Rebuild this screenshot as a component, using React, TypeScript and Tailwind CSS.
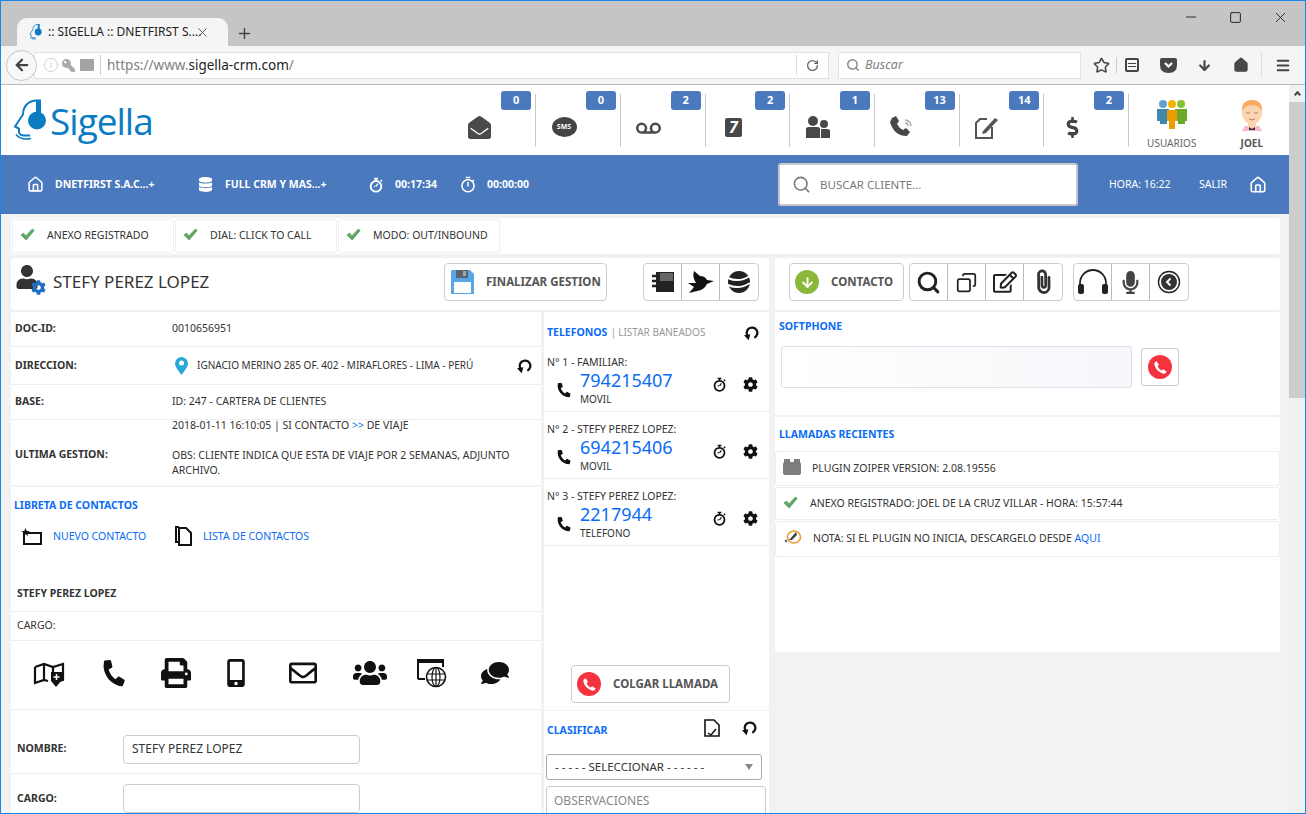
import React from "react";
import { ArrowLeft, Search, RotateCw, Star, Plus, X, Minus, Square, Menu, ArrowDown, House, Copy, Phone } from "lucide-react";
import { FaEnvelopeOpen, FaVoicemail, FaDollarSign, FaDatabase, FaUser, FaCog, FaPhone, FaPrint, FaMobileAlt, FaUsers, FaComments, FaRegEnvelope, FaMicrophone, FaRegEdit, FaKey, FaPaperclip } from "react-icons/fa";
import { MdOutlineTimer } from "react-icons/md";

const FONT = "[font-family:'Noto_Sans','Liberation_Sans',sans-serif]";

function Undo({ size = 18 }: { size?: number }) {
  return (
    <svg width={size} height={size} viewBox="0 0 24 24" fill="none">
      <path d="M8.5 18A8 8 0 1 1 17 19" stroke="#111" strokeWidth="3.4" />
      <path d="M1.5 15.5 L11 14 L8.5 23 Z" fill="#111" />
    </svg>
  );
}
function Check({ size = 16 }: { size?: number }) {
  return (
    <svg width={size} height={size} viewBox="0 0 16 16">
      <path d="M1 8.5 L3.6 6.3 L6.4 9.2 L13.2 2 L15.2 3.8 L6.5 14 Z" fill="#5fa863" stroke="#3f8a48" strokeWidth=".5" />
    </svg>
  );
}
function RedPhone({ size = 24 }: { size?: number }) {
  return (
    <span style={{ width: size, height: size }} className="rounded-full bg-[#f5333f] flex items-center justify-center shrink-0">
      <svg width={size * 0.62} height={size * 0.62} viewBox="0 0 24 24"><path d="M6 2 L9.5 7.5 L7.5 10 Q9.5 15 14 17 L16.5 15 L22 18.5 Q20.5 22.5 17 22 Q5 19 2 7 Q2 3 6 2 Z" fill="#fff" /></svg>
    </span>
  );
}
function Stopwatch({ size = 16, color = "#111" }: { size?: number; color?: string }) {
  return (
    <svg width={size} height={size} viewBox="0 0 24 24" fill="none">
      <circle cx="12" cy="14" r="8" stroke={color} strokeWidth="2.8" />
      <path d="M9 2.5h6M12 3v3M19 4.5l2 2" stroke={color} strokeWidth="2.5" />
      <path d="M12 14l3-4M9 14h2" stroke={color} strokeWidth="2" />
    </svg>
  );
}
function Floppy() {
  return (
    <svg width="23" height="24" viewBox="0 0 23 24">
      <path d="M1 0H19L23 4V24H0V1Z" fill="#5aa5e6" />
      <rect x="5" y="0" width="12" height="8" fill="#5b6470" />
      <rect x="12" y="1" width="3" height="5" fill="#9aa" />
      <rect x="3" y="12" width="17" height="11" fill="#fdfdfd" />
    </svg>
  );
}
function HeadLogo({ w, h, solid }: { w: number; h: number; solid?: boolean }) {
  return (
    <svg width={w} height={h} viewBox="0 0 34 42" fill="none">
      <path d="M24 1 C15 1 10 7 10 15 L2 27 L6 29 L6 33 Q7 36 11 36 L17 36" stroke="#0a7cc4" strokeWidth="2" />
      <path d="M3 35 Q8 41 18 39" stroke="#0a7cc4" strokeWidth={solid ? 2.4 : 1.6} />
      <rect x="23" y="0" width="5" height="14" fill="#0a7cc4" />
      <circle cx="24" cy="21" r="9" fill="#0a7cc4" />
    </svg>
  );
}

const badges: [React.ReactNode, string][] = [
  [<FaEnvelopeOpen size={23} color="#4a4a4a" />, "0"],
  [
    <span className="relative flex h-[20px] w-[25px] items-center justify-center rounded-[50%] bg-[#444] text-[7px] font-bold text-white">SMS</span>,
    "0",
  ],
  [<FaVoicemail size={25} color="#4a4a4a" />, "2"],
  [
    <span className="flex h-[19px] w-[17px] items-center justify-center rounded-[2px] bg-[#484848] text-[16px] font-bold italic leading-none text-white">7</span>,
    "2",
  ],
  [
    <svg width="24" height="22" viewBox="0 0 24 22" fill="#484848"><circle cx="7" cy="5" r="5" /><circle cx="18" cy="8" r="4" /><path d="M0 13q0-2 3-2h8q3 0 3 2v9H0ZM15 13h6q3 0 3 2v7h-9Z" /></svg>,
    "1",
  ],
  [
    <svg width="25" height="22" viewBox="0 0 25 22" fill="none"><path d="M2 2 L6 0 L9 5 L7 8 Q9 12 13 14 L16 12 L20 16 L17 20 Q4 20 0 6 Z" fill="#484848" /><path d="M15 4a6 6 0 0 1 6 6M15 7a3 3 0 0 1 3 3" stroke="#aaa" strokeWidth="1.5" /></svg>,
    "13",
  ],
  [
    <svg width="24" height="23" viewBox="0 0 24 23" fill="none"><path d="M12 3H5L1 7V22H17V11" stroke="#555" strokeWidth="2" /><path d="M8 15L20 2L23 4L11 17L7 18Z" fill="#555" /></svg>,
    "14",
  ],
  [<FaDollarSign size={21} color="#444" />, "2"],
];

function Chip({ t }: { t: string }) {
  return (
    <div className="flex h-[34px] w-[162px] items-center rounded-[3px] border border-[#eeeeee] pl-[7px]">
      <span className="-mt-1 w-[27px]"><Check size={15} /></span>
      <span className="text-[10.5px] text-[#333]">{t}</span>
    </div>
  );
}
function Group({ children, cell = 38 }: { children: React.ReactNode[]; cell?: number }) {
  return (
    <div className="flex h-[38px] rounded-[4px] border border-[#cccccc] bg-white">
      {children.map((c, i) => (
        <div key={i} style={{ width: cell }} className="flex items-center justify-center border-r border-[#bbbbbb] last:border-r-0">{c}</div>
      ))}
    </div>
  );
}
function Title({ children }: { children: React.ReactNode }) {
  return <span className="text-[10.5px] font-bold text-[#0a6cf5]">{children}</span>;
}
function InfoRow({ label, h, children }: { label: string; h: string; children: React.ReactNode }) {
  return (
    <div className={`flex items-center border-b border-[#eeeeee] pl-[4px] text-[10.5px] text-[#333] ${h}`}>
      <b className="w-[157px] shrink-0 text-[#333]">{label}</b>
      {children}
    </div>
  );
}
function PhoneEntry({ n, num, kind }: { n: string; num: string; kind: string }) {
  return (
    <div className="h-[67px] border-b border-[#eeeeee] pl-[3px] pr-[2px]">
      <div className="flex h-[22px] items-end text-[10.5px] leading-none text-[#333]">{n}</div>
      <div className="flex">
        <span className="flex w-[33px] items-center justify-center pt-[8px]"><FaPhone size={14} color="#111" className="rotate-[95deg]" /></span>
        <div className="flex flex-1 flex-col pt-[1px]">
          <span className="text-[18px] leading-[25px] text-[#0a6cf5]">{num}</span>
          <span className="text-[10px] leading-[12px] text-[#333]">{kind}</span>
        </div>
        <span className="mr-[16px] flex items-center pb-[4px]"><Stopwatch size={15} /></span>
        <span className="mr-[9px] flex items-center pb-[4px]"><FaCog size={15} color="#111" /></span>
      </div>
    </div>
  );
}

export default function App() {
  return (
    <div className={`flex h-[814px] w-[1306px] flex-col overflow-hidden border border-[#1a87e6] bg-[#f2f2f2] ${FONT}`}>
      {/* tab strip */}
      <div className="flex h-[45px] shrink-0 bg-[#c5c5c5]">
        <div className="mt-[17px] ml-[16px] flex h-[28px] w-[211px] items-center rounded-t-[10px] bg-[#f5f5f5] pl-[11px]">
          <HeadLogo w={15} h={16} solid />
          <span className="ml-[5px] w-[147px] text-[12px] whitespace-nowrap text-[#222]">:: SIGELLA :: DNETFIRST S....</span>
          <X size={15} color="#555" strokeWidth={1.5} />
        </div>
        <div className="mt-[20px] ml-[8px] flex h-[24px] w-[20px] items-center"><Plus size={17} color="#444" strokeWidth={2} /></div>
        <div className="flex-1" />
        <div className="mt-[8px] mr-[16px] flex h-[16px] gap-[30px]">
          <Minus size={16} color="#222" strokeWidth={1.4} />
          <Square size={13} color="#222" strokeWidth={1.8} className="mt-[2px]" />
          <X size={17} color="#222" strokeWidth={1.3} />
        </div>
      </div>
      {/* toolbar */}
      <div className="flex h-[39px] shrink-0 items-center border-b border-[#bbbbbb] bg-[#f5f5f5] pl-[5px]">
        <div className="z-10 flex h-[31px] w-[31px] items-center justify-center rounded-full border border-[#c6c6c6] bg-[#f8f8f8]">
          <ArrowLeft size={18} color="#444" strokeWidth={3} />
        </div>
        <div className="-ml-[3px] flex h-[27px] w-[795px] items-center border border-[#e2e2e2] bg-white pl-[9px]">
          <span className="flex h-[14px] w-[14px] items-center justify-center rounded-full border border-[#d0d0d0] text-[9px] text-[#ccc]">i</span>
          <FaKey size={13} color="#aaa" className="ml-[4px] -scale-x-100" />
          <span className="ml-[5px] h-[12px] w-[14px] rounded-[1px] bg-[#a3a3a3]" />
          <span className="ml-[6px] h-[20px] border-l border-[#cccccc]" />
          <span className="ml-[6px] flex-1 text-[13.5px] text-[#808080]">https://www.<span className="text-[#222]">sigella-crm.com</span>/</span>
          <span className="h-[20px] border-l border-[#dddddd]" />
          <span className="flex w-[31px] justify-center"><RotateCw size={13} color="#666" strokeWidth={2.4} /></span>
        </div>
        <div className="ml-[9px] flex h-[27px] w-[243px] items-center rounded-[1px] border border-[#e2e2e2] bg-white pl-[7px]">
          <Search size={14} color="#888" strokeWidth={2.5} />
          <span className="ml-[5px] text-[12.5px] text-[#808080] italic">Buscar</span>
        </div>
        <span className="ml-[12px] flex w-[17px] justify-center"><Star size={17} color="#444" strokeWidth={2.2} /></span>
        <span className="ml-[6px] h-[16px] border-l border-[#cccccc]" />
        <span className="ml-[8px] flex h-[14px] w-[14px] flex-col justify-center gap-[2px] rounded-[2px] border-2 border-[#444] px-[1px]"><i className="h-[1px] bg-[#444]" /><i className="h-[1px] bg-[#444]" /></span>
        <svg className="ml-[21px]" width="17" height="15" viewBox="0 0 17 15"><path d="M2 0H15Q17 0 17 2V7Q17 15 8.5 15Q0 15 0 7V2Q0 0 2 0Z" fill="#484848" /><path d="M5 5L8.5 8.5L12 5" stroke="#fff" strokeWidth="2.2" fill="none" /></svg>
        <span className="ml-[20px] flex w-[15px] justify-center"><ArrowDown size={17} color="#484848" strokeWidth={3.5} /></span>
        <span className="ml-[21px] flex w-[16px] justify-center"><House size={16} color="#484848" fill="#484848" /></span>
        <span className="ml-[12px] h-[26px] border-l border-[#dddddd]" />
        <span className="ml-[13px] flex w-[16px] justify-center"><Menu size={19} color="#444" strokeWidth={3} /></span>
      </div>
      {/* page */}
      <div className="flex min-h-0 flex-1">
        <div className="flex min-w-0 flex-1 flex-col">
          {/* header */}
          <div className="flex h-[70px] shrink-0 items-center bg-white">
            <div className="ml-[12px] flex w-[441px] items-center">
              <HeadLogo w={34} h={43} />
              <span className="ml-[3px] text-[37px] leading-none font-normal text-[#0a7cc4] [font-family:'Open_Sans',sans-serif] tracking-[-1px]">Sigella</span>
            </div>
            {badges.map(([ic, n], i) => (
              <div key={i} className="relative flex h-[53px] w-[85px] items-center justify-center border-r border-[#c8c8c8] pt-[14px] pr-[28px]">
                {ic}
                <span className="absolute top-[-3px] right-[4px] flex h-[19px] w-[30px] items-center justify-center rounded-[3px] bg-[#4a79bd] text-[11px] font-bold text-white">{n}</span>
              </div>
            ))}
            <div className="flex w-[86px] flex-col items-center pt-[6px]">
              <svg width="32" height="30" viewBox="0 0 32 30">
                <circle cx="7" cy="5" r="4" fill="#5fa3cc" /><path d="M1 10h12v12h-2v3H4v-3H1Z" fill="#3f87ad" />
                <circle cx="25" cy="5" r="4" fill="#84c232" /><path d="M19 10h12v12h-2v3h-7v-3h-3Z" fill="#6aa827" />
                <circle cx="16" cy="5" r="4" fill="#f5b400" /><path d="M11 11h10v11h-2v8h-6v-8h-2Z" fill="#eb9c00" />
              </svg>
              <span className="mt-[9px] text-[10px] leading-none text-[#666]">USUARIOS</span>
            </div>
            <div className="flex w-[75px] flex-col items-center pt-[6px]">
              <svg width="26" height="32" viewBox="0 0 26 32">
                <path d="M6 27h14l3 5H3Z" fill="#f7b7c8" />
                <rect x="9" y="24" width="8" height="5" fill="#fbd3ae" />
                <ellipse cx="13" cy="14" rx="10" ry="11" fill="#fbd3ae" />
                <path d="M3 13Q2 1 13 1Q24 1 23 13Q21 6 13 6Q5 6 3 13Z" fill="#fba95c" />
                <path d="M7 14h4M15 14h4M10 20q3 2 6 0" stroke="#b9825c" strokeWidth="1" fill="none" />
                <path d="M10 28l3 2 3-2v3h-6Z" fill="#333" />
              </svg>
              <span className="mt-[7px] text-[10px] leading-none font-bold text-[#555]">JOEL</span>
            </div>
          </div>
          {/* blue bar */}
          <div className="flex h-[59px] shrink-0 items-center bg-[#4a79bd] pl-[26px] text-[10.5px] font-bold whitespace-nowrap text-white">
            <span className="w-[28px]"><House size={17} color="#fff" strokeWidth={2.2} /></span>
            <span className="w-[143px]">DNETFIRST S.A.C...+</span>
            <span className="w-[27px]"><FaDatabase size={15} color="#fff" /></span>
            <span className="w-[143px]">FULL CRM Y MAS...+</span>
            <span className="w-[27px]"><Stopwatch size={16} color="#fff" /></span>
            <span className="w-[64px]">00:17:34</span>
            <span className="w-[28px]"><MdOutlineTimer size={18} color="#fff" /></span>
            <span className="w-[291px]">00:00:00</span>
            <div className="flex h-[43px] w-[300px] items-center rounded-[3px] border-2 border-[#c8c8c8] bg-white pl-[12px]">
              <Search size={19} color="#777" strokeWidth={2} />
              <span className="ml-[9px] text-[11.5px] font-normal text-[#777]">BUSCAR CLIENTE...</span>
            </div>
            <span className="ml-[31px] w-[90px] font-normal">HORA: 16:22</span>
            <span className="w-[50px] font-normal">SALIR</span>
            <House size={18} color="#fff" strokeWidth={2.2} />
          </div>
          {/* body */}
          <div className="relative min-h-0 flex-1 overflow-hidden pl-[10px]">
            <div className="mt-[4px] mr-[9px] flex h-[36px] gap-[1px] rounded-[3px] bg-white pt-[1px] pl-[1px]">
              <Chip t="ANEXO REGISTRADO" />
              <Chip t="DIAL: CLICK TO CALL" />
              <Chip t="MODO: OUT/INBOUND" />
            </div>
            <div className="mt-[4px] mr-[9px] flex h-[52px] gap-[6px]">
              <div className="flex w-[758px] rounded-[3px] bg-white pt-[5px]">
                <span className="relative mt-[2px] ml-[3px] h-[30px] w-[32px]">
                  <FaUser size={24} color="#333" className="ml-[1px]" />
                  <FaCog size={15} color="#1f6fc4" className="absolute right-0 bottom-0" />
                </span>
                <span className="mt-[4px] ml-[7px] w-[391px] text-[17px] leading-[30px] text-[#333]">STEFY PEREZ LOPEZ</span>
                <div className="flex h-[38px] w-[163px] items-center rounded-[4px] border border-[#cccccc] pl-[6px]">
                  <Floppy />
                  <span className="ml-[12px] text-[11.5px] font-bold text-[#555]">FINALIZAR GESTION</span>
                </div>
                <div className="ml-[36px]">
                  <Group>
                    {[
                      <svg key="a" width="24" height="24" viewBox="0 0 24 24"><rect x="5" y="2" width="18" height="20" fill="#222" /><path d="M1 6h6M1 11h6M1 16h6" stroke="#222" strokeWidth="2.5" /><rect x="9" y="3" width="13" height="8" fill="#666" /></svg>,
                      <svg key="b" width="28" height="24" viewBox="0 0 28 24"><path d="M7 1L13 6Q18 6 20 10L27 11L20 14Q17 20 10 21L2 23L7 17L1 13L9 13Q5 7 7 1Z" fill="#111" /></svg>,
                      <svg key="c" width="24" height="24" viewBox="0 0 24 24"><circle cx="12" cy="12" r="11" fill="#222" /><path d="M1 8Q12 13 23 6M1 15Q12 20 23 13" stroke="#fff" strokeWidth="2" fill="none" /></svg>,
                    ]}
                  </Group>
                </div>
              </div>
              <div className="flex flex-1 rounded-[3px] bg-white pt-[5px] pl-[14px]">
                <div className="flex h-[38px] w-[115px] items-center rounded-[4px] border border-[#cccccc] pl-[5px]">
                  <span className="flex h-[24px] w-[24px] items-center justify-center rounded-full bg-[#8ab83a]"><ArrowDown size={15} color="#fff" strokeWidth={3} /></span>
                  <span className="ml-[12px] text-[11.5px] font-bold text-[#555]">CONTACTO</span>
                </div>
                <div className="ml-[5px]">
                  <Group>
                    {[
                      <Search key="a" size={25} color="#222" strokeWidth={2.8} />,
                      <Copy key="b" size={21} color="#222" strokeWidth={2} className="-scale-x-100" />,
                      <FaRegEdit key="c" size={24} color="#222" />,
                      <FaPaperclip key="d" size={22} color="#333" className="-rotate-45" />,
                    ]}
                  </Group>
                </div>
                <div className="ml-[10px]">
                  <Group>
                    {[
                      <svg key="a" width="32" height="26" viewBox="0 0 32 26"><path d="M3 20V14A13 13 0 0 1 29 14V20" stroke="#222" strokeWidth="1.8" fill="none" /><rect x="1" y="15" width="6" height="10" rx="2" fill="#222" /><rect x="25" y="15" width="6" height="10" rx="2" fill="#222" /></svg>,
                      <FaMicrophone key="b" size={23} color="#444" />,
                      <svg key="c" width="24" height="24" viewBox="0 0 24 24"><circle cx="12" cy="12" r="10.5" stroke="#222" strokeWidth="1.4" fill="none" /><circle cx="12" cy="12" r="8" fill="#333" /><path d="M13.5 8.5L10 12L13.5 15.5" stroke="#fff" strokeWidth="2" fill="none" /></svg>,
                    ]}
                  </Group>
                </div>
              </div>
            </div>
            {/* columns */}
            <div className="mt-[2px] mr-[9px] flex gap-[6px]">
              {/* left + mid */}
              <div className="flex w-[758px] gap-[3px]">
                <div className="flex w-[530px] flex-col gap-[2px]">
                  <div className="bg-white">
                    <InfoRow label="DOC-ID:" h="h-[35px]"><span>0010656951</span></InfoRow>
                    <InfoRow label="DIRECCION:" h="h-[38px]">
                      <svg width="13" height="18" viewBox="0 0 13 18" className="ml-[3px]"><path d="M6.5 0A6.5 6.5 0 0 1 13 6.5Q13 10 6.5 18Q0 10 0 6.5A6.5 6.5 0 0 1 6.5 0Z" fill="#2aa9d8" /><circle cx="6.5" cy="6" r="2.5" fill="#fff" /></svg>
                      <span className="ml-[9px] w-[319px] text-[10px]">IGNACIO MERINO 285 OF. 402 - MIRAFLORES - LIMA - PERÚ</span>
                      <Undo size={16} />
                    </InfoRow>
                    <InfoRow label="BASE:" h="h-[35px]"><span>ID: 247 - CARTERA DE CLIENTES</span></InfoRow>
                    <div className="flex h-[65px] pl-[4px] text-[10.5px] text-[#333]">
                      <b className="mt-[27px] w-[157px] shrink-0">ULTIMA GESTION:</b>
                      <div className="w-[345px] leading-[15px]">
                        <div className="-mt-[2px]">2018-01-11 16:10:05 | SI CONTACTO <span className="text-[#0a6cf5]">&gt;&gt;</span> DE VIAJE</div>
                        <div className="mt-[15px]">OBS: CLIENTE INDICA QUE ESTA DE VIAJE POR 2 SEMANAS, ADJUNTO ARCHIVO.</div>
                      </div>
                    </div>
                  </div>
                  <div className="bg-white">
                    <div className="flex h-[223px] flex-col">
                      <div className="pt-[9px] pl-[3px] leading-[15px]"><Title>LIBRETA DE CONTACTOS</Title></div>
                      <div className="mt-[13px] flex h-[22px] items-center pl-[10px] text-[10.5px] text-[#0a6cf5]">
                        <svg width="22" height="18" viewBox="0 0 22 18" fill="none"><rect x="3" y="5" width="17" height="11" stroke="#111" strokeWidth="2" /><path d="M4.5 0L5.7 3H8.5L6.3 5L7.2 8L4.5 6.2L1.8 8L2.7 5L.5 3H3.3Z" fill="#111" /></svg>
                        <span className="ml-[10px] w-[122px]">NUEVO CONTACTO</span>
                        <svg width="18" height="22" viewBox="0 0 18 22" fill="none"><path d="M4 1H1V16H4" stroke="#111" strokeWidth="2" /><path d="M4 2H11L16 7V19H4Z" stroke="#111" strokeWidth="2" /></svg>
                        <span className="ml-[10px]">LISTA DE CONTACTOS</span>
                      </div>
                      <div className="mt-[24px] h-[41px] border-b border-[#eeeeee] pt-[14px] pl-[6px] text-[10.5px] leading-[15px] font-bold text-[#333]">STEFY PEREZ LOPEZ</div>
                      <div className="flex h-[30px] items-center border-b border-[#eeeeee] pl-[6px] text-[10.5px] text-[#333]">CARGO:</div>
                      <div className="flex h-[72px] items-center border-b border-[#eeeeee] pb-[3px] pl-[22px]">
                        <span className="w-[64px]">
                          <svg width="32" height="28" viewBox="0 0 32 28" fill="none"><path d="M2 8L11 5L20 8L30 5V21L22 23M2 8V24L11 21L15 22M11 5V21M20 8V14" stroke="#111" strokeWidth="2.2" /><path d="M18 13H29V21L23 28L18 22Z" fill="#111" /><path d="M23.5 15V21M20.5 18H26.5" stroke="#fff" strokeWidth="1.5" /></svg>
                        </span>
                        <span className="w-[64px]"><FaPhone size={24} color="#111" className="ml-[5px] rotate-[100deg]" /></span>
                        <span className="w-[64px]"><FaPrint size={30} color="#111" /></span>
                        <span className="w-[64px]"><FaMobileAlt size={28} color="#111" className="-ml-[3px]" /></span>
                        <span className="w-[64px]"><FaRegEnvelope size={28} color="#111" /></span>
                        <span className="w-[64px]"><FaUsers size={34} color="#111" /></span>
                        <span className="w-[64px]">
                          <svg width="30" height="30" viewBox="0 0 30 30" fill="none"><path d="M1 21V2H26V9" stroke="#111" strokeWidth="2" /><rect x="1" y="2" width="25" height="3" fill="#111" /><path d="M1 21H8" stroke="#111" strokeWidth="2" /><circle cx="19" cy="19" r="9.5" stroke="#111" strokeWidth="1.6" /><ellipse cx="19" cy="19" rx="4" ry="9.5" stroke="#111" strokeWidth="1.2" /><path d="M10 16H28M10 22H28M19 10V28" stroke="#111" strokeWidth="1.2" /></svg>
                        </span>
                        <span><FaComments size={28} color="#111" className="-scale-x-100" /></span>
                      </div>
                      <div className="flex items-center" />
                    </div>
                    <div className="flex h-[64px] items-center border-b border-[#eeeeee] pt-[15px] pl-[6px]">
                      <b className="w-[106px] text-[10.5px] text-[#333]">NOMBRE:</b>
                      <div className="flex h-[29px] w-[237px] items-center rounded-[4px] border border-[#cccccc] pl-[8px] text-[12px] text-[#333]">STEFY PEREZ LOPEZ</div>
                    </div>
                    <div className="flex h-[50px] items-start pt-[10px] pl-[6px]">
                      <b className="mt-[7px] w-[106px] text-[10.5px] text-[#333]">CARGO:</b>
                      <div className="h-[29px] w-[237px] rounded-[4px] border border-[#cccccc]" />
                    </div>
                  </div>
                </div>
                <div className="flex w-[225px] flex-col gap-[1px]">
                  <div className="flex h-[398px] flex-col rounded-[3px] bg-white">
                    <div className="flex h-[33px] items-center pt-[8px] pl-[3px] text-[10.5px]">
                      <Title>TELEFONOS</Title>
                      <span className="ml-[3px] text-[#aaa]">|</span>
                      <span className="ml-[2px] w-[125px] text-[10px] text-[#999]">LISTAR BANEADOS</span>
                      <Undo size={16} />
                    </div>
                    <PhoneEntry n="N° 1 - FAMILIAR:" num="794215407" kind="MOVIL" />
                    <PhoneEntry n="N° 2 - STEFY PEREZ LOPEZ:" num="694215406" kind="MOVIL" />
                    <PhoneEntry n="N° 3 - STEFY PEREZ LOPEZ:" num="2217944" kind="TELEFONO" />
                    <div className="mt-auto mb-[7px] ml-[27px] flex h-[38px] w-[159px] items-center rounded-[4px] border border-[#cccccc] pl-[5px]">
                      <RedPhone size={24} />
                      <span className="ml-[12px] text-[11.5px] font-bold text-[#555]">COLGAR LLAMADA</span>
                    </div>
                  </div>
                  <div className="flex-1 bg-white pl-[2px]">
                    <div className="flex h-[34px] items-center pl-[1px]">
                      <span className="w-[157px]"><Title>CLASIFICAR</Title></span>
                      <svg width="16" height="18" viewBox="0 0 16 18" fill="none"><path d="M1 1H10L15 6V17H1Z" stroke="#111" strokeWidth="1.6" /><path d="M4 14L7 16L12 10" stroke="#111" strokeWidth="1.5" /></svg>
                      <span className="ml-[21px]"><Undo size={16} /></span>
                    </div>
                    <div className="mt-[9px] flex h-[26px] w-[216px] items-center rounded-[3px] border border-[#aaaaaa] pl-[8px] text-[11.5px] text-[#333]">
                      <span className="w-[190px] whitespace-nowrap">- - - - - SELECCIONAR - - - - - -</span>
                      <span className="border-x-[4px] border-t-[6px] border-x-transparent border-t-[#888]" />
                    </div>
                    <div className="mt-[6px] h-[40px] w-[220px] rounded-[3px] border border-[#cccccc] pt-[5px] pl-[7px] text-[12px] text-[#888]">OBSERVACIONES</div>
                  </div>
                </div>
              </div>
              {/* right */}
              <div className="flex flex-1 flex-col gap-[2px]">
                <div className="h-[103px] rounded-[3px] bg-white">
                  <div className="pt-[5px] pl-[4px] leading-[15px]"><Title>SOFTPHONE</Title></div>
                  <div className="mt-[12px] ml-[6px] flex">
                    <div className="h-[42px] w-[351px] rounded-[3px] border border-[#dde2ea] bg-gradient-to-r from-white to-[#f5f7fa]" />
                    <div className="mt-[2px] ml-[9px] flex h-[38px] w-[38px] items-center justify-center rounded-[3px] border border-[#cccccc]"><RedPhone size={24} /></div>
                  </div>
                </div>
                <div className="h-[235px] rounded-[3px] bg-white">
                  <div className="flex h-[34px] items-center pt-[2px] pl-[4px]"><Title>LLAMADAS RECIENTES</Title></div>
                  <div className="flex h-[35px] items-center rounded-[3px] border border-[#eeeeee] pl-[7px] text-[10.5px] text-[#333]">
                    <span className="relative h-[13px] w-[18px] rounded-[2px] bg-[#7d7d7d] before:absolute before:-top-[3px] before:left-[1px] before:h-[4px] before:w-[6px] before:bg-[#7d7d7d] after:absolute after:-top-[3px] after:right-[1px] after:h-[4px] after:w-[6px] after:bg-[#7d7d7d]" />
                    <span className="ml-[11px]">PLUGIN ZOIPER VERSION: 2.08.19556</span>
                  </div>
                  <div className="mt-[1px] flex h-[33px] items-center rounded-[3px] border border-[#eeeeee] pl-[7px] text-[10.5px] text-[#333]">
                    <span className="-mt-[3px] w-[16px]"><Check size={15} /></span>
                    <span className="ml-[11px]">ANEXO REGISTRADO: JOEL DE LA CRUZ VILLAR - HORA: 15:57:44</span>
                  </div>
                  <div className="mt-[1px] flex h-[36px] items-center rounded-[3px] border border-[#eeeeee] pl-[8px] text-[10.5px] text-[#333]">
                    <svg width="18" height="16" viewBox="0 0 18 16" fill="none" className="-mt-[4px]"><ellipse cx="10" cy="8" rx="6.5" ry="6" stroke="#ee9a33" strokeWidth="1.6" /><path d="M5 11L12 3L13 6L8 11Z" fill="#444" /><circle cx="2" cy="12" r="1.3" fill="#666" /></svg>
                    <span className="ml-[11px]">NOTA: SI EL PLUGIN NO INICIA, DESCARGELO DESDE <span className="text-[#0a6cf5]">AQUI</span></span>
                  </div>
                </div>
              </div>
            </div>
          </div>
        </div>
        {/* scrollbar */}
        <div className="flex w-[16px] shrink-0 flex-col bg-[#f1f1f1]">
          <div className="flex h-[17px] items-center justify-center"><span className="h-[5px] w-[5px] translate-y-[1px] rotate-45 border-t-2 border-l-2 border-[#444]" /></div>
          <div className="h-[296px] bg-[#cdcdcd]" />
        </div>
      </div>
    </div>
  );
}
